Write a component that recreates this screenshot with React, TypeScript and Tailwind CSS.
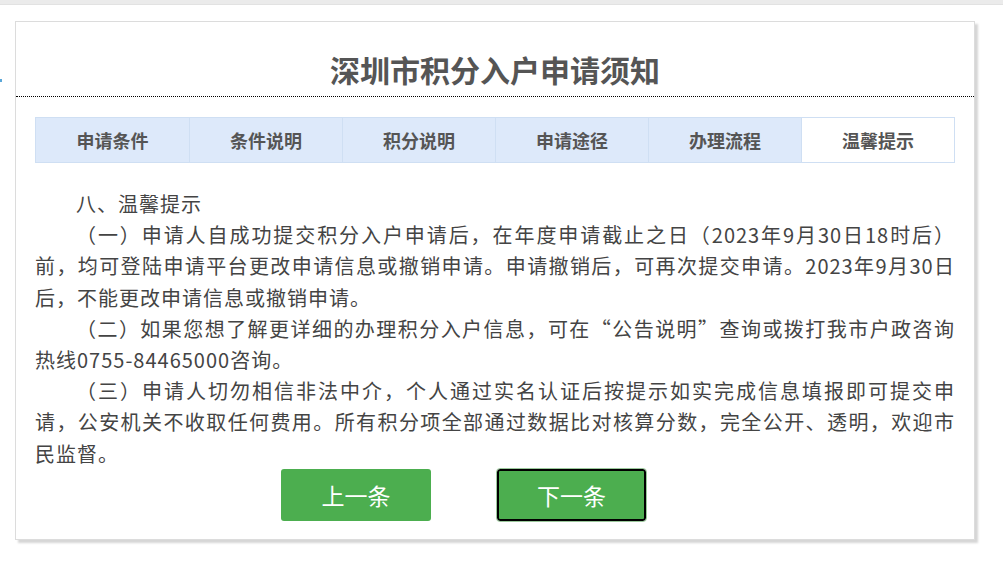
import React, { useState } from 'react'

const tabs = ['申请条件', '条件说明', '积分说明', '申请途径', '办理流程', '温馨提示']

export default function App() {
  const [active, setActive] = useState(5)

  return (
    <div
      className="relative w-[1003px] h-[563px] bg-white overflow-hidden"
      style={{ fontFamily: '"Microsoft YaHei", "Noto Sans CJK SC", "Noto Sans", sans-serif' }}
    >
      {/* top strip of the page */}
      <div className="h-[5px] bg-[#ebebeb] border-b border-[#e2e2e2]" />

      {/* stray mark at the left edge */}
      <div className="absolute left-0 top-[79px] w-[2px] h-[3px] bg-[#5aa7d8]" />

      <div className="ml-[15px] mt-[16px] w-[960px] border border-[#dcdcdc] bg-white shadow-[3px_3px_2px_#d6d6d6]">
        {/* header */}
        <div className="h-[75px] border-b border-dotted border-black flex items-end justify-center pb-[6px]">
          <h1 className="text-[30px] leading-[42px] font-bold text-[#555]">
            深圳市积分入户申请须知
          </h1>
        </div>

        <div className="px-[19px] pt-[20px] pb-[18px]">
          {/* tabs */}
          <div className="grid grid-cols-6 h-[46px] border border-[#cfdff3]">
            {tabs.map((t, i) => (
              <button
                key={t}
                onClick={() => setActive(i)}
                className={`h-full flex items-center justify-center text-[18px] font-bold text-[#555] ${
                  i > 0 ? 'border-l border-[#cfdff3]' : ''
                } ${i === active ? 'bg-white' : 'bg-[#dde9fa]'}`}
              >
                {t}
              </button>
            ))}
          </div>

          {/* content */}
          <div className="mt-[25px] text-[20px] leading-[31.2px] text-[#444] text-justify tracking-[1px]">
            <p className="indent-[41px]">八、温馨提示</p>
            <p className="indent-[41px]">
              （一）申请人自成功提交积分入户申请后，在年度申请截止之日（2023年9月30日18时后）前，均可登陆申请平台更改申请信息或撤销申请。申请撤销后，可再次提交申请。2023年9月30日后，不能更改申请信息或撤销申请。
            </p>
            <p className="indent-[41px]">
              （二）如果您想了解更详细的办理积分入户信息，可在“公告说明”查询或拨打我市户政咨询热线0755-84465000咨询。
            </p>
            <p className="indent-[41px]">
              （三）申请人切勿相信非法中介，个人通过实名认证后按提示如实完成信息填报即可提交申请，公安机关不收取任何费用。所有积分项全部通过数据比对核算分数，完全公开、透明，欢迎市民监督。
            </p>
          </div>

          {/* buttons */}
          <div className="flex gap-[66px] ml-[246px]">
            <button className="w-[150px] h-[52px] rounded-[3px] bg-[#4cae4f] text-white text-[23px]">
              上一条
            </button>
            <button className="w-[149px] h-[52px] rounded-[3px] bg-[#4cae4f] text-white text-[23px] border-2 border-black outline outline-1 outline-offset-0 outline-[#9bc89c]">
              下一条
            </button>
          </div>
        </div>
      </div>
    </div>
  )
}
